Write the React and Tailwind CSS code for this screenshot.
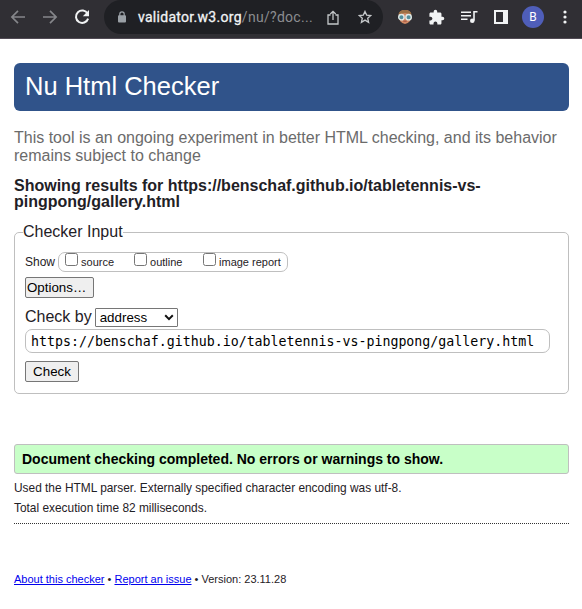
import React from 'react';

function Toolbar() {
  return (
    <header className="flex h-[39px] items-start border-b border-[#514b55] bg-[#302f34] text-[#e8eaed]">
      <div className="flex h-[34px] w-[104px] shrink-0 items-center pl-[10px]">
        <svg width="16" height="16" viewBox="0 0 16 16" fill="none" stroke="#85868a" strokeWidth="1.7">
          <path d="M15 8H2.2M8 1.9L1.9 8L8 14.1" />
        </svg>
        <svg className="ml-4" width="16" height="16" viewBox="0 0 16 16" fill="none" stroke="#85868a" strokeWidth="1.7">
          <path d="M1 8h12.8M8 1.9L14.1 8L8 14.1" />
        </svg>
        <svg className="ml-4" width="16" height="16" viewBox="0 0 16 16" fill="none">
          <path d="M13.6 4.7A6.2 6.2 0 1 0 14.1 9.6" stroke="#f1f3f4" strokeWidth="2" />
          <path d="M15 1v6.2H8.8z" fill="#f1f3f4" />
        </svg>
      </div>
      <div className="flex h-[34px] w-[279px] shrink-0 items-center rounded-full bg-[#1f2024] pl-[14px]">
        <svg width="8" height="12" viewBox="0 0 8 12">
          <path d="M1.8 5V3a2.2 2.2 0 0 1 4.4 0v2" fill="none" stroke="#9aa0a6" strokeWidth="1.2" />
          <rect y="4.2" width="8" height="7.4" rx="1" fill="#9aa0a6" />
        </svg>
        <div className="ml-[12px] w-[176px] whitespace-nowrap font-['Roboto',sans-serif] text-[14px] leading-5 tracking-[0.29px] text-[#8b8d91]">
          <span className="text-[#f1f3f4] [-webkit-text-stroke:0.3px]">validator.w3.org</span>/nu/?doc...
        </div>
        <svg className="ml-[13px]" width="12" height="15" viewBox="0 0 12 15" fill="none" stroke="#c4c7c9" strokeWidth="1.3">
          <path d="M3.5 5H1v9h10V5H8.500M6 10V1.500M3.300 4L6 1.300L8.700 4" />
        </svg>
        <svg className="ml-[19px]" width="14" height="14" viewBox="0 0 14 14" fill="none" stroke="#c4c7c9" strokeWidth="1.3">
          <path d="M7 1.400L8.700 5.100L12.800 5.500L9.700 8.200L10.600 12.300L7 10.100L3.400 12.300L4.300 8.200L1.200 5.500L5.300 5.100Z" />
        </svg>
      </div>
      <div className="flex h-[34px] items-center pl-[14px]">
        <svg width="16" height="16" viewBox="0 0 16 16">
          <path d="M2 7.500C1.500 3 4 1 8 1s6.500 2 6 6.500L13 12q-5 6-10 0z" fill="#cf8964" />
          <path d="M1.500 6C1.700 2.400 4 .9 8 .9s6.300 1.500 6.500 5.100L12.500 5 8 4 3.500 5z" fill="#9b7045" />
          <path d="M6.300 12.200h3.400" stroke="#a34f3d" strokeWidth="1" />
          <circle cx="4.400" cy="8.200" r="2.700" fill="#548d9a" stroke="#e1e9e6" strokeWidth="1.400" />
          <circle cx="11.600" cy="8.200" r="2.700" fill="#548d9a" stroke="#e1e9e6" strokeWidth="1.400" />
        </svg>
        <svg className="ml-[15px]" width="17" height="17" viewBox="0 0 24 24" fill="#f1f3f4">
          <path d="M20.500 11H19V7c0-1.100-.9-2-2-2h-4V3.500a2.500 2.500 0 0 0-5 0V5H4c-1.100 0-2 .9-2 2v3.800h1.500c1.500 0 2.700 1.200 2.700 2.700S5 16.200 3.500 16.200H2V20c0 1.100.9 2 2 2h3.800v-1.500c0-1.500 1.200-2.700 2.700-2.700s2.700 1.200 2.700 2.700V22H17c1.100 0 2-.9 2-2v-4h1.500a2.500 2.500 0 0 0 0-5z" />
        </svg>
        <svg className="ml-[16px]" width="17" height="14" viewBox="0 0 17 14" fill="none">
          <path d="M0 2.200h10M0 5.700h10M0 9.200h6.500M13 10.500V1.700h3.500" stroke="#f1f3f4" strokeWidth="1.600" />
          <circle cx="11.300" cy="10.800" r="2.300" fill="#f1f3f4" />
        </svg>
        <div className="ml-[16px] h-[14px] w-[14px] border-2 border-r-[5px] border-[#f1f3f4]" />
        <div className="ml-[14px] flex h-[22px] w-[22px] items-center justify-center rounded-full bg-[#4f5eb9] font-['Roboto',sans-serif] text-[12px] leading-none text-white">B</div>
        <svg className="ml-[19px]" width="4" height="14" viewBox="0 0 4 14" fill="#f1f3f4">
          <circle cx="2" cy="2" r="1.600" /><circle cx="2" cy="7" r="1.600" /><circle cx="2" cy="12" r="1.600" />
        </svg>
      </div>
    </header>
  );
}

function Option({ label, className }) {
  return (
    <label className={"flex items-start " + className}>
      <span className="h-[13px] w-[13px] shrink-0 rounded-[2.5px] border border-[#767676] bg-white" />
      <span className="ml-[3px] mt-[3px] whitespace-nowrap text-[11px] leading-[13px]">{label}</span>
    </label>
  );
}

export default function App() {
  return (
    <div className="h-[609px] w-[582px] overflow-hidden bg-white font-['Liberation_Sans',Arial,sans-serif] text-[#1f2126]">
      <Toolbar />
      <main className="px-[14px] pr-[13px] pt-[24px]">
        <h1 className="h-[48px] rounded-[6px] bg-[#30538a] pl-[11px] text-[25.5px] leading-[47px] text-white">Nu Html Checker</h1>
        <p className="mt-[18px] whitespace-nowrap text-[16px] leading-[18px] text-[#6b6b6b]">
          This tool is an ongoing experiment in better HTML checking, and its behavior<br />remains subject to change
        </p>
        <h2 className="mt-[13px] whitespace-nowrap text-[16px] font-bold leading-[16px]">
          Showing results for https://benschaf.github.io/tabletennis-vs-<br />pingpong/gallery.html
        </h2>
        <fieldset className="mt-[13px] h-[171px] rounded-[5px] border border-[#bfbfbf] pl-[10px]">
          <legend className="-ml-[2px] h-[18px] text-[16px] leading-[18px]">Checker Input</legend>
          <div className="mt-[11px] flex h-[20px] items-center">
            <span className="text-[12px]">Show</span>
            <div className="ml-[3px] flex h-[20px] w-[230px] items-start rounded-[7px] border border-[#bfbfbf] pl-[6px]">
              <Option label="source" className="w-[69px]" />
              <Option label="outline" className="w-[69px]" />
              <Option label="image report" className="" />
            </div>
          </div>
          <button className="mt-[5px] block h-[21px] w-[69px] rounded-[2px] border border-[#767676] bg-[#efefef] pl-px text-left text-[13.33px] leading-[18px] text-black">Options…</button>
          <div className="mt-[9px] flex h-[20px] items-center">
            <span className="text-[16px] leading-[18px]">Check by</span>
            <div className="ml-[3px] flex h-[19px] w-[83px] items-center justify-between rounded-[1px] border border-[#767676] bg-white pl-[4px] pr-[3px] text-[13.33px] leading-[17px] text-black">
              address
              <svg width="10" height="7" viewBox="0 0 10 7" fill="none" stroke="#111" strokeWidth="2"><path d="M1.200 1.300L5 5.100L8.800 1.300" /></svg>
            </div>
          </div>
          <div className="mt-[2px] h-[24px] w-[525px] whitespace-nowrap rounded-[7px] border border-[#bfbfbf] pl-[5px] font-['DejaVu_Sans_Mono',monospace] text-[13.27px] leading-[23px] text-black">https://benschaf.github.io/tabletennis-vs-pingpong/gallery.html</div>
          <button className="mt-[8px] block h-[21px] w-[54px] rounded-[2px] border border-[#767676] bg-[#efefef] text-[13.33px] leading-[19px] text-black">Check</button>
        </fieldset>
        <div className="mt-[50px] h-[30px] rounded-[3px] border border-[#bfbfbf] bg-[#c8ffc8] pl-[7px] text-[14px] font-bold leading-[29px] text-black">Document checking completed. No errors or warnings to show.</div>
        <p className="mt-[7px] text-[11.9px] leading-[14px]">Used the HTML parser. Externally specified character encoding was utf-8.</p>
        <p className="mt-[6px] text-[11.9px] leading-[14px]">Total execution time 82 milliseconds.</p>
        <hr className="mt-[8px] border-t border-dotted border-[#333]" />
        <footer className="mt-[48px] text-[11px] leading-[15px]">
          <a className="text-[#0000ee] underline">About this checker</a> • <a className="text-[#0000ee] underline">Report an issue</a> • Version: 23.11.28
        </footer>
      </main>
    </div>
  );
}
